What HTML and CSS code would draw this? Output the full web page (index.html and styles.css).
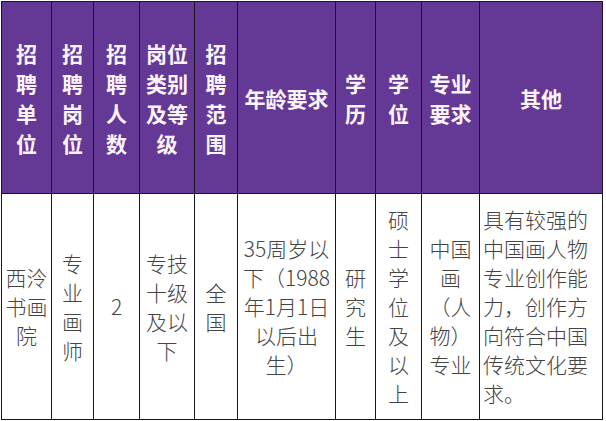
FILE: index.html
```html
<!DOCTYPE html>
<html lang="zh">
<head>
<meta charset="utf-8">
<link rel="stylesheet" href="styles.css">
</head>
<body>
<div class="table">
  <div class="cell head">招聘单位</div>
  <div class="cell head">招聘岗位</div>
  <div class="cell head">招聘人数</div>
  <div class="cell head">岗位类别及等级</div>
  <div class="cell head">招聘范围</div>
  <div class="cell head">年龄要求</div>
  <div class="cell head">学历</div>
  <div class="cell head">学位</div>
  <div class="cell head">专业要求</div>
  <div class="cell head">其他</div>

  <div class="cell body">西泠书画院</div>
  <div class="cell body">专业画师</div>
  <div class="cell body">2</div>
  <div class="cell body">专技十级及以下</div>
  <div class="cell body">全国</div>
  <div class="cell body">35周岁以下（1988年1月1日以后出生）</div>
  <div class="cell body">研究生</div>
  <div class="cell body">硕士学位及以上</div>
  <div class="cell body">中国画（人物）专业</div>
  <div class="cell body left">具有较强的中国画人物专业创作能力，创作方向符合中国传统文化要求。</div>
</div>
</body>
</html>
```

FILE: styles.css
```css
html, body {
  margin: 0;
  padding: 0;
  background: #ffffff;
}

.table {
  margin: 1px 0 0 1px;
  width: 602px;
  box-sizing: border-box;
  padding: 1px;
  background: #1c1222;
  display: grid;
  grid-template-columns: 49px 41px 45px 54px 42px 97px 39px 45px 57px 122px;
  grid-template-rows: 191px 225px;
  gap: 1px;
  font-family: "Noto Sans CJK SC", "Noto Sans", sans-serif;
}

.cell {
  display: flex;
  align-items: center;
  justify-content: center;
  text-align: center;
  box-sizing: border-box;
  word-break: normal;
  line-break: strict;
}

.head {
  background: #643995;
  color: #fdf3fb;
  font-weight: 700;
  font-size: 21px;
  line-height: 30px;
  padding: 0 4px;
}

.body {
  background: #ffffff;
  color: #444444;
  font-weight: 300;
  font-size: 21px;
  line-height: 29px;
  padding: 0 2px;
}

.body.left {
  justify-content: flex-start;
  text-align: left;
  padding: 0 2px 0 3px;
}
```
